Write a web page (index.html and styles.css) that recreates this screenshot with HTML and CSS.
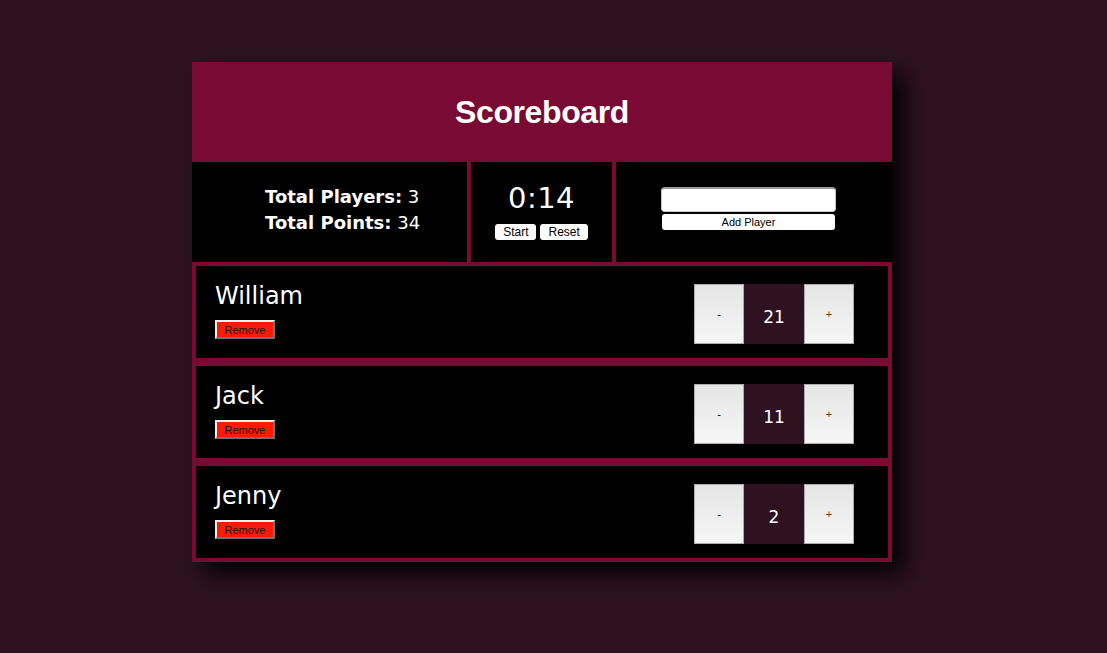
FILE: index.html
```html
<!DOCTYPE html>
<html>
<head>
<meta charset="utf-8">
<title>Scoreboard</title>
<link rel="stylesheet" href="styles.css">
</head>
<body>
<div class="scoreboard">
  <div class="header">
    <h1 class="title">Scoreboard</h1>
  </div>
  <div class="stats-row">
    <div class="stats">
      <div class="stat-line"><span class="label">Total Players:</span> 3</div>
      <div class="stat-line"><span class="label">Total Points:</span> 34</div>
    </div>
    <div class="stopwatch">
      <div class="time">0:14</div>
      <div class="sw-buttons">
        <button class="small-btn">Start</button>
        <button class="small-btn">Reset</button>
      </div>
    </div>
    <div class="add-form">
      <input class="name-input" type="text">
      <button class="add-btn">Add Player</button>
    </div>
  </div>
  <div class="player">
    <div class="player-info">
      <div class="player-name">William</div>
      <button class="remove-btn">Remove</button>
    </div>
    <div class="counter">
      <button class="counter-btn">-</button>
      <div class="score">21</div>
      <button class="counter-btn plus">+</button>
    </div>
  </div>
  <div class="player">
    <div class="player-info">
      <div class="player-name">Jack</div>
      <button class="remove-btn">Remove</button>
    </div>
    <div class="counter">
      <button class="counter-btn">-</button>
      <div class="score">11</div>
      <button class="counter-btn plus">+</button>
    </div>
  </div>
  <div class="player">
    <div class="player-info">
      <div class="player-name">Jenny</div>
      <button class="remove-btn">Remove</button>
    </div>
    <div class="counter">
      <button class="counter-btn">-</button>
      <div class="score">2</div>
      <button class="counter-btn plus">+</button>
    </div>
  </div>
</div>
</body>
</html>
```

FILE: styles.css
```css
html, body {
  margin: 0;
  padding: 0;
}
body {
  background: #2e1220;
  font-family: "DejaVu Sans", Verdana, sans-serif;
  color: #fff;
  height: 653px;
  overflow: hidden;
}
.scoreboard {
  width: 700px;
  margin: 62px 0 0 192px;
  background: #000;
  box-shadow: 12px 12px 22px rgba(0, 0, 0, 0.95);
}
.header {
  height: 100px;
  background: #780a33;
  display: flex;
  align-items: center;
  justify-content: center;
}
.title {
  margin: 0;
  font-family: "Liberation Sans", Arial, sans-serif;
  font-weight: bold;
  font-size: 32px;
  color: #fff;
  letter-spacing: -0.4px;
}
.stats-row {
  display: flex;
  height: 100px;
  background: #000;
}
.stats {
  width: 279px;
  flex: none;
  border-right: 4px solid #780a33;
  display: flex;
  flex-direction: column;
  justify-content: center;
  padding-left: 73px;
  box-sizing: border-box;
  font-size: 18px;
  line-height: 26px;
  padding-bottom: 4px;
}
.label {
  font-weight: bold;
}
.stopwatch {
  width: 145px;
  flex: none;
  box-sizing: border-box;
  border-right: 4px solid #780a33;
  display: flex;
  flex-direction: column;
  align-items: center;
  justify-content: center;
  padding-bottom: 2px;
}
.time {
  font-size: 29px;
  line-height: 32px;
  letter-spacing: 0.5px;
}
.sw-buttons {
  display: flex;
  gap: 4px;
  margin-top: 10px;
}
.small-btn {
  font-family: "Liberation Sans", Arial, sans-serif;
  font-size: 12px;
  height: 16px;
  padding: 0 8px;
  background: #fff;
  color: #000;
  border: none;
  border-radius: 3px;
  line-height: 16px;
}
.add-form {
  flex: 1;
  display: flex;
  flex-direction: column;
  justify-content: center;
  padding-left: 45px;
  padding-bottom: 8px;
  gap: 2px;
}
.name-input {
  width: 175px;
  height: 25px;
  box-sizing: border-box;
  border: 1px solid #c8c8c8;
  border-top: 2px solid #9a9a9a;
  border-radius: 4px;
  background: #fff;
  margin: 0;
  padding: 0;
}
.add-btn {
  width: 173px;
  margin-left: 1px;
  height: 16px;
  border: none;
  border-radius: 3px;
  background: #fff;
  color: #000;
  font-family: "Liberation Sans", Arial, sans-serif;
  font-size: 11px;
  padding: 0;
  line-height: 16px;
}
.player {
  height: 100px;
  box-sizing: border-box;
  border: 4px solid #780a33;
  display: flex;
  align-items: center;
  justify-content: space-between;
  padding: 0 34px 0 19px;
}
.player-info {
  display: flex;
  flex-direction: column;
  align-items: flex-start;
  padding-bottom: 3px;
}
.player-name {
  font-size: 24px;
  line-height: 28px;
}
.remove-btn {
  margin-top: 10px;
  width: 60px;
  height: 19px;
  background: #ff1a00;
  color: #111;
  font-family: "Liberation Sans", Arial, sans-serif;
  font-size: 11px;
  border-style: solid;
  border-width: 2px;
  border-color: #f0f0f0 #707070 #707070 #f0f0f0;
  padding: 0;
}
.counter {
  display: flex;
  height: 60px;
  margin-top: 4px;
}
.counter-btn {
  width: 50px;
  height: 60px;
  border: 1px solid #adadad;
  background: linear-gradient(#e5e5e5, #f6f6f6);
  color: #000;
  font-family: "Liberation Sans", Arial, sans-serif;
  font-size: 11px;
  padding: 0;
}
.counter-btn.plus {
  color: #7a3a00;
}
.score {
  width: 60px;
  height: 60px;
  background: #2e1220;
  display: flex;
  align-items: center;
  justify-content: center;
  font-size: 17px;
  padding-top: 6px;
  box-sizing: border-box;
}
```
